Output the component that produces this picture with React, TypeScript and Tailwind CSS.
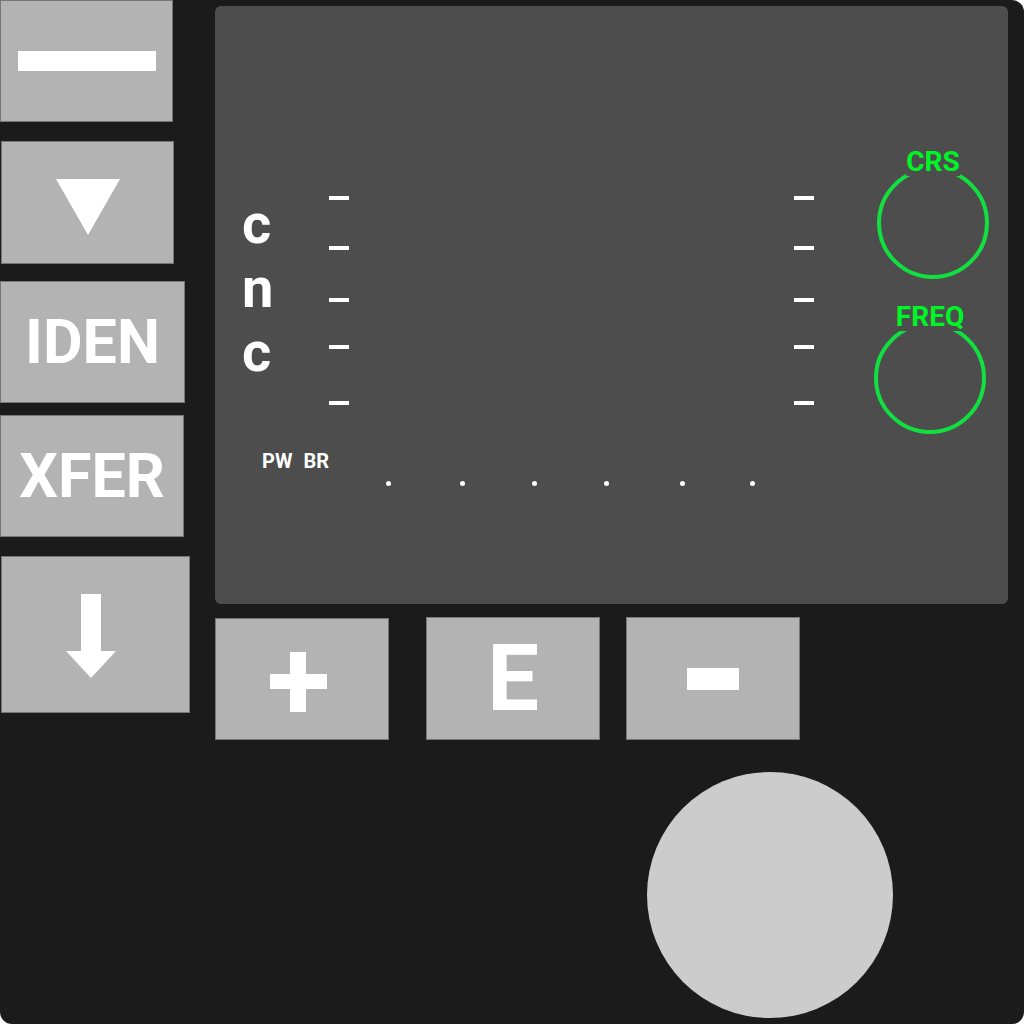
import React from "react";

const font = { fontFamily: "Roboto, 'Liberation Sans', sans-serif" };

function Key({ className, children }: { className: string; children?: React.ReactNode }) {
  return (
    <div className={`flex items-center justify-center bg-[#b3b3b3] border border-[#777] text-white font-bold ${className}`}>
      {children}
    </div>
  );
}

function Dial({ label, className }: { label: string; className: string }) {
  return (
    <div className={`relative w-[112px] h-[112px] rounded-full border-4 border-[#12e040] ${className}`}>
      <span className="absolute left-1/2 -translate-x-1/2 -top-[23px] bg-[#4d4d4d] text-[28px] leading-none font-bold text-[#00f526] whitespace-nowrap">
        {label}
      </span>
    </div>
  );
}

export default function App() {
  const dashTops = ["mt-[190px]", "mt-[46px]", "mt-[48px]", "mt-[43px]", "mt-[52px]"];
  const dotGaps = ["ml-0", "ml-[69px]", "ml-[67px]", "ml-[67px]", "ml-[71px]", "ml-[65px]"];

  return (
    <div className="w-[1024px] h-[1024px] bg-white" style={font}>
      <div className="flex w-[1024px] h-[1024px] bg-[#1b1b1b] rounded-[12px]">
        {/* left keys */}
        <div className="w-[191px] shrink-0 flex flex-col items-start">
          <Key className="w-[173px] h-[122px]">
            <div className="w-[138px] h-[20px] bg-white" />
          </Key>
          <Key className="ml-[1px] mt-[19px] w-[173px] h-[123px]">
            <svg width="64" height="56" viewBox="0 0 64 56" className="mt-[9px]">
              <polygon points="0,0 64,0 32,56" fill="white" />
            </svg>
          </Key>
          <Key className="mt-[17px] w-[185px] h-[122px] text-[61px] leading-none">IDEN</Key>
          <Key className="mt-[12px] w-[184px] h-[122px] text-[61px] leading-none">XFER</Key>
          <Key className="ml-[1px] mt-[19px] w-[189px] h-[157px]">
            <svg width="50" height="84" viewBox="0 0 50 84" className="mr-[9px] mt-[3px]">
              <path d="M15 0 H35 V57 H50 L25 84 L0 57 H15 Z" fill="white" />
            </svg>
          </Key>
        </div>

        {/* display + lower keys */}
        <div className="ml-[24px] pt-[6px] flex flex-col items-start">
          <div className="w-[793px] h-[598px] bg-[#4d4d4d] rounded-[6px] flex flex-col text-white">
            <div className="h-[440px] flex items-start pl-[27px]">
              <div className="w-[87px] mt-[186px] flex flex-col text-[56px] leading-[64px] font-bold">
                <span>c</span>
                <span>n</span>
                <span>c</span>
              </div>
              <div className="w-[20px] flex flex-col">
                {dashTops.map((m) => (
                  <div key={m + "l"} className={`${m} w-[20px] h-[4px] bg-white`} />
                ))}
              </div>
              <div className="ml-[445px] w-[20px] flex flex-col">
                {dashTops.map((m) => (
                  <div key={m + "r"} className={`${m} w-[20px] h-[4px] bg-white`} />
                ))}
              </div>
              <div className="ml-[60px] flex flex-col items-start">
                <Dial label="CRS" className="ml-[3px] mt-[161px]" />
                <Dial label="FREQ" className="mt-[43px]" />
              </div>
            </div>
            <div className="flex items-start">
              <div className="ml-[47px] w-[124px] mt-[5px] flex gap-[11px] text-[20px] leading-none font-bold">
                <span>PW</span>
                <span>BR</span>
              </div>
              <div className="flex items-start mt-[35px]">
                {dotGaps.map((g, i) => (
                  <div key={i} className={`${g} w-[5px] h-[5px] rounded-full bg-white`} />
                ))}
              </div>
            </div>
          </div>

          <div className="mt-[13px] flex items-start">
            <Key className="mt-[1px] w-[174px] h-[122px]">
              <svg width="57" height="60" viewBox="0 0 57 60" className="mr-[8px] mt-[6px]">
                <rect x="0" y="22" width="57" height="15" fill="white" />
                <rect x="20" y="0" width="16" height="60" fill="white" />
              </svg>
            </Key>
            <Key className="ml-[37px] w-[174px] h-[123px] text-[92px] leading-none">E</Key>
            <Key className="ml-[26px] w-[174px] h-[123px]">
              <div className="w-[52px] h-[22px] bg-white" />
            </Key>
          </div>

          <div className="ml-[432px] mt-[32px] w-[246px] h-[246px] rounded-full bg-[#cccccc]" />
        </div>
      </div>
    </div>
  );
}
